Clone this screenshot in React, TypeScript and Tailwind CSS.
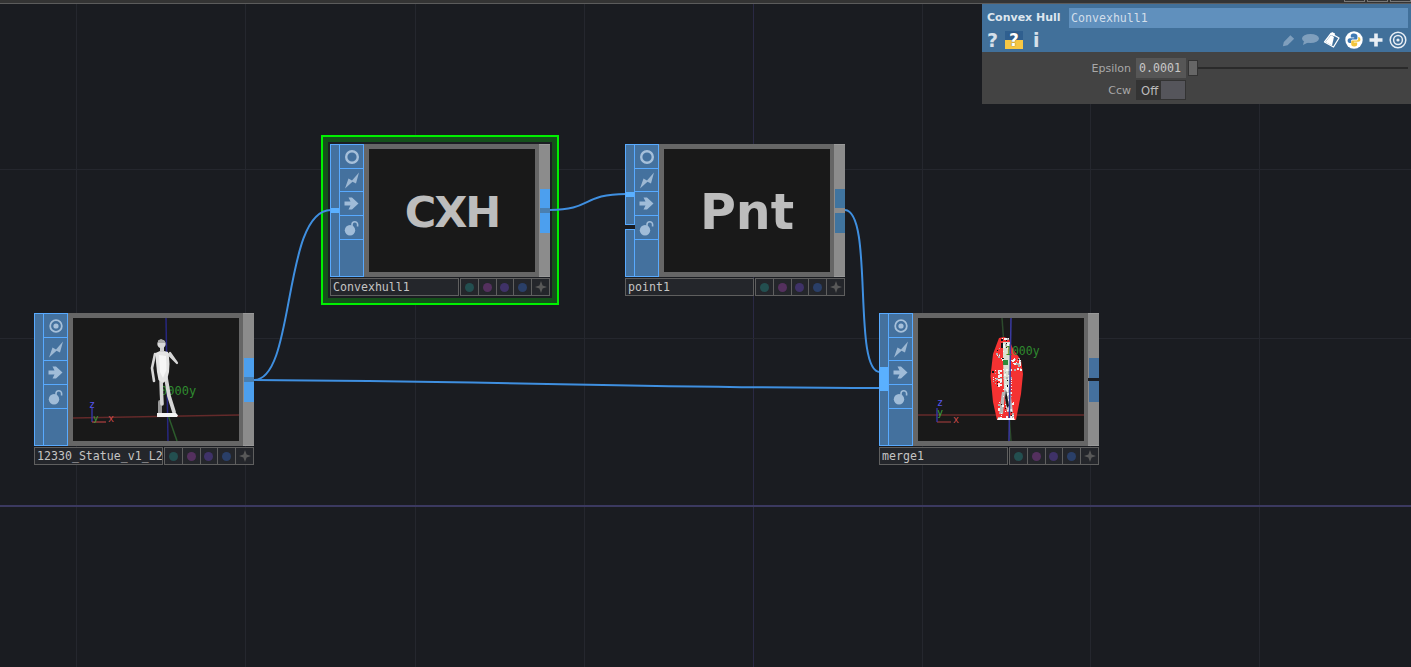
import type { ReactNode } from 'react';

const MONO = 'font-["DejaVu_Sans_Mono",monospace]';

type NodeProps = {
  x: number;
  y: number;
  name: string;
  inputs: ReactNode;
  outputs: ReactNode;
  target?: boolean;
  children: ReactNode;
};

function CircleIcon({ target }: { target?: boolean }) {
  return (
    <svg width="16" height="16" viewBox="0 0 16 16">
      <circle cx="8" cy="8" r="5.8" fill="none" stroke="#a6c0da" strokeWidth={target ? 1.8 : 2.4} />
      {target && <circle cx="8" cy="8" r="2.6" fill="#a6c0da" />}
    </svg>
  );
}

function BoltIcon() {
  return (
    <svg width="16" height="17" viewBox="0 0 16 17">
      <path d="M1 16.5 L4.5 6.5 L8 8.5 L15 0.5 L12 11.5 L8.5 9.8 Z" fill="#9db8d3" />
    </svg>
  );
}

function ArrowIcon() {
  return (
    <svg width="15" height="13" viewBox="0 0 15 13">
      <path d="M0.5 4.5 H6.5 L4.5 0.5 H8 L14.5 6.5 L8 12.5 H4.5 L6.5 8.5 H0.5 Z" fill="#a0bcd8" />
    </svg>
  );
}

function LockIcon() {
  return (
    <svg width="16" height="16" viewBox="0 0 16 16">
      <circle cx="6" cy="10.2" r="5.2" fill="#a0bcd8" />
      <path d="M8 6 V4.5 A2.8 2.8 0 0 1 13.6 4.5 V6.5" fill="none" stroke="#a0bcd8" strokeWidth="1.6" />
    </svg>
  );
}

function NodeFlags() {
  const dots = ['bg-[#234f50]', 'bg-[#54305e]', 'bg-[#3f3268]', 'bg-[#2a3f68]'];
  return (
    <div className="ml-px flex h-[18px] w-[90px] border border-[#5f5f5f] bg-[#24262b]">
      {dots.map((c) => (
        <div key={c} className="flex flex-1 items-center justify-center border-r border-[#5f5f5f]">
          <div className={`h-[9px] w-[9px] rounded-full ${c}`} />
        </div>
      ))}
      <div className="flex flex-1 items-center justify-center">
        <svg width="12" height="12" viewBox="0 0 12 12">
          <path d="M6 0 L7.6 4.4 L12 6 L7.6 7.6 L6 12 L4.4 7.6 L0 6 L4.4 4.4 Z" fill="#585858" />
        </svg>
      </div>
    </div>
  );
}

function OpNode({ x, y, name, inputs, outputs, target, children }: NodeProps) {
  return (
    <div className="absolute flex h-[152px] w-[220px] flex-col" style={{ left: x, top: y }}>
      <div className="flex h-[133px]">
        <div className="w-[10px] shrink-0">{inputs}</div>
        <div className="flex w-[24px] shrink-0 flex-col border border-l-0 border-[#58aaff] bg-[#44719e]">
          <div className="flex h-[24px] items-center justify-center border-b border-[#58aaff]">
            <CircleIcon target={target} />
          </div>
          <div className="flex h-[23px] items-center justify-center border-b border-[#58aaff]">
            <BoltIcon />
          </div>
          <div className="flex h-[24px] items-center justify-center border-b border-[#58aaff]">
            <ArrowIcon />
          </div>
          <div className="flex h-[24px] items-center justify-center border-b border-[#58aaff]">
            <LockIcon />
          </div>
        </div>
        <div className="relative min-w-0 flex-1 overflow-hidden border-[5px] border-r-[4px] border-[#666666] bg-[#191919]">{children}</div>
        <div className="w-[11px] shrink-0 border-t border-b border-[#999999] bg-[#8c8c8c] pl-px">{outputs}</div>
      </div>
      <div className="mt-px flex h-[18px]">
        <div className={`h-full w-[129px] overflow-hidden border border-[#5f5f5f] bg-[#24262b] pl-[2px] text-[11.6px] leading-[16px] whitespace-nowrap text-[#c4c4c4] ${MONO}`}>
          {name}
        </div>
        <NodeFlags />
      </div>
    </div>
  );
}

// input column, with the small or wide connector marker
function InputStrip({ markerTop, markerH = 5 }: { markerTop: number; markerH?: number }) {
  return (
    <div className="relative h-full border border-[#58aaff] bg-[#44719e]">
      <div className="absolute left-0 w-full bg-[#5ab0ff]" style={{ top: markerTop, height: markerH }} />
    </div>
  );
}

function LabelText({ size, spacing = 0, children }: { size: number; spacing?: number; children: string }) {
  return (
    <div
      className="flex h-full items-center justify-center pt-1 font-['DejaVu_Sans'] font-bold text-[#bdbdbd]"
      style={{ fontSize: size, letterSpacing: spacing }}
    >
      {children}
    </div>
  );
}

function StatuePreview() {
  return (
    <svg width="166" height="123" viewBox="0 0 166 123" className="block">
      <path d="M93 0 L95 123" stroke="#27277f" strokeWidth="1.5" />
      <path d="M0 100 L166 97" stroke="#642a2a" strokeWidth="1.5" />
      <path d="M95 97 L104 123" stroke="#2c5c2c" strokeWidth="1.5" />
      <path d="M19 90 V104" stroke="#3a3ac0" strokeWidth="1.2" />
      <path d="M19 104 H33" stroke="#b04040" strokeWidth="1.2" />
      <text x="16" y="90" fill="#5555ee" fontSize="10" fontFamily="DejaVu Sans Mono">z</text>
      <text x="20" y="103" fill="#3fa03f" fontSize="9" fontFamily="DejaVu Sans Mono">y</text>
      <text x="35" y="104" fill="#d04a4a" fontSize="10" fontFamily="DejaVu Sans Mono">x</text>
      <text x="87" y="77" fill="#2f8a2f" fontSize="12" fontFamily="DejaVu Sans Mono">0000y</text>
      {/* statue */}
      <g fill="none" stroke="#d6d6d6" strokeLinecap="round" strokeLinejoin="round">
        <path d="M87 84 L87 95" strokeWidth="4" stroke="#989898" />
        <path d="M88 60 L88.5 76 L89 86" strokeWidth="3.6" />
        <path d="M93 60 L96 78 L101 94" strokeWidth="3.8" />
        <path d="M82 36 L79 50 L81 63" strokeWidth="2.6" />
        <path d="M95 36 L104 45 L97 35" strokeWidth="2.2" />
      </g>
      <path d="M82.5 35 L87 33 L91 33 L95 34 L96 39 L96.5 46 L96 54 L94 62 L90 65 L85.5 62 L84 54 L83 44 Z" fill="#e4e4e4" />
      <path d="M86 37 L93 38 L93.5 52 L90 60 L87 54 Z" fill="#f6f6f6" />
      <path d="M87 29 H91 V34 H87 Z" fill="#cfcfcf" />
      <circle cx="88.5" cy="26" r="4.2" fill="#d8d8d8" />
      <path d="M85 22.5 L88 21 L92 23 V25 H85 Z" fill="#aaaaaa" />
      <path d="M84 95 H103 L105 97.5 L104 99 H84 Z" fill="#f4f4f4" />
    </svg>
  );
}

// pixel scatter of the statue showing through the hull
const CLUSTERS = [
  { x0: 74, x1: 84, y0: 52, y1: 68, n: 34 },
  { x0: 92, x1: 103, y0: 40, y1: 52, n: 30 },
  { x0: 78, x1: 86, y0: 28, y1: 42, n: 14 },
  { x0: 83, x1: 93, y0: 20, y1: 30, n: 30 },
  { x0: 80, x1: 96, y0: 84, y1: 101, n: 44 },
  { x0: 84, x1: 94, y0: 50, y1: 84, n: 44 },
];

function speckles() {
  const out: { x: number; y: number; c: string; d: number }[] = [];
  let s = 11;
  for (const c of CLUSTERS) {
    for (let i = 0; i < c.n; i++) {
      s = (s * 137 + 59) % 1009;
      const y = c.y0 + (s % (c.y1 - c.y0));
      s = (s * 137 + 59) % 1009;
      const x = c.x0 + (s % (c.x1 - c.x0));
      out.push({ x, y, c: s % 5 === 0 ? '#151515' : s % 3 === 0 ? '#b0b0b0' : '#f4f4f4', d: s % 2 === 0 ? 2 : 1 });
    }
  }
  return out;
}

function HullPreview() {
  return (
    <svg width="166" height="123" viewBox="0 0 166 123" className="block">
      <path d="M84 0 L93 123" stroke="#2c4a2c" strokeWidth="1.5" />
      <path d="M0 97 H166" stroke="#642a2a" strokeWidth="1.5" />
      <path d="M19 104 H33" stroke="#b04040" strokeWidth="1" fill="none" />
      <path d="M19 90 V104" stroke="#3a3ac0" strokeWidth="1.2" />
      <text x="19" y="88" fill="#5555ee" fontSize="10" fontFamily="DejaVu Sans Mono">z</text>
      <text x="19" y="98" fill="#3fa03f" fontSize="10" fontFamily="DejaVu Sans Mono">y</text>
      <text x="35" y="105" fill="#d04a4a" fontSize="10" fontFamily="DejaVu Sans Mono">x</text>
      <path d="M81 20 L86 19 L91 21 L95 31 L103 42 L105 56 L103 76 L98 102 L79 102 L75 84 L72.5 58 L75 36 Z" fill="#f53232" />
      <path d="M85 24 L91 24 L92 40 L92 72 L86 72 L85 40 Z" fill="#d9e0d2" />
      <path d="M86 72 L92 72 L95 94 L89 94 Z" fill="#c0c0c0" />
      <path d="M84 74 L87 74 L85 96 L81 96 Z" fill="#b8b8b8" />
      {speckles().map((p, i) => (
        <rect key={i} x={p.x} y={p.y} width={p.d} height={p.d} fill={p.c} />
      ))}
      <path d="M88 72 L91 88 L89 90 L87 80 Z" fill="#151515" />
      <path d="M93 0 L91 123" stroke="#3a3aa0" strokeWidth="1.5" />
      <path d="M80 100 L96 100 L97 102 L79 102 Z" fill="#ffffff" />
      <text x="87" y="37" fill="#2f8a2f" fontSize="11.5" fontFamily="DejaVu Sans Mono">1000y</text>
      <rect x="85" y="42" width="5" height="5" fill="#2e8a3a" />
    </svg>
  );
}

function HeaderIcons() {
  return (
    <div className="-mr-px flex h-[22px] items-center justify-end">
      <svg width="15" height="15" viewBox="0 0 16 16">
        <path d="M2 14 L3 9.5 L10 2.5 L14 6 L7 13 Z" fill="#7f9fbd" />
      </svg>
      <svg width="20" height="14" viewBox="0 0 20 14" className="ml-[4px]">
        <ellipse cx="10.5" cy="5.5" rx="8.5" ry="4.5" fill="#7f9fbd" />
        <path d="M4 8 L3 12 L9 9 Z" fill="#7f9fbd" />
      </svg>
      <svg width="18" height="18" viewBox="0 0 18 18" className="ml-[3px]">
        <path d="M1.5 11 L8 2.5 L16 7 L10.5 16 Z" fill="#41709a" stroke="#ffffff" strokeWidth="1.3" strokeLinejoin="round" />
        <path d="M2.5 11 L8 4 L11 6 L9 14.5 Z" fill="#ffffff" />
        <path d="M7 3.5 L9 1 L12 2.5 L11.5 5.5 Z" fill="#ffffff" />
      </svg>
      <svg width="18" height="18" viewBox="0 0 18 18" className="ml-[4px]">
        <circle cx="9" cy="9" r="8.7" fill="#ffffff" />
        <path d="M9 2.5 C6 2.5 5.8 4 5.8 5 V6.5 H9.2 V7.2 H4.8 C3.4 7.2 2.6 8.2 2.6 9.5 C2.6 11 3.4 12 4.6 12 H6 V10.3 C6 9.2 6.8 8.6 7.8 8.6 H10.8 C11.8 8.6 12.4 8 12.4 7 V5 C12.4 3.4 11 2.5 9 2.5 Z" fill="#3f7ab5" />
        <path d="M9 15.5 C12 15.5 12.2 14 12.2 13 V11.5 H8.8 V10.8 H13.2 C14.6 10.8 15.4 9.8 15.4 8.5 C15.4 7 14.6 6 13.4 6 H13.2 V7.7 C13.2 8.8 12.4 9.6 11.4 9.6 H7.8 C6.8 9.6 6.2 10.2 6.2 11 V13 C6.2 14.6 7 15.5 9 15.5 Z" fill="#f2c53d" />
      </svg>
      <svg width="16" height="16" viewBox="0 0 16 16" className="ml-[5px]">
        <path d="M6.2 1.5 H9.8 V6.2 H14.5 V9.8 H9.8 V14.5 H6.2 V9.8 H1.5 V6.2 H6.2 Z" fill="#e8eef5" />
      </svg>
      <svg width="18" height="18" viewBox="0 0 18 18" className="ml-[5px]">
        <circle cx="9" cy="9" r="7.8" fill="none" stroke="#e8eef5" strokeWidth="1.5" />
        <circle cx="9" cy="9" r="4.4" fill="none" stroke="#e8eef5" strokeWidth="1.5" />
        <circle cx="9" cy="9" r="1.6" fill="#e8eef5" />
      </svg>
    </div>
  );
}

function ParamPanel() {
  return (
    <div className="absolute top-[4px] right-0 h-[100px] w-[429px] bg-[#434343]">
      <div className="flex h-[48px] flex-col bg-[#41709a] px-[5px] pt-[4px]">
        <div className="flex h-[20px] items-center">
          <div className="w-[82px] shrink-0 font-['DejaVu_Sans'] text-[11px] font-bold whitespace-nowrap text-[#dde6ee]">
            Convex Hull
          </div>
          <div className={`mr-[-2px] h-full flex-1 bg-[#6090bd] pl-[2px] text-[11.6px] leading-[20px] text-[#d2deea] ${MONO}`}>
            Convexhull1
          </div>
        </div>
        <div className="flex h-[24px] items-center justify-between">
          <div className="flex items-center">
            <span className="w-[18px] font-['DejaVu_Sans'] text-[19px] leading-none font-bold text-[#d6e0ea]">?</span>
            <span className="relative flex h-[18px] w-[18px] items-center justify-center bg-[#2f5f8f]">
              <span className="absolute inset-x-0 bottom-0 h-[9px] bg-[#f6c744]" />
              <span className="relative font-['DejaVu_Sans'] text-[17px] leading-none font-bold text-[#ffffff] [text-shadow:0_0_1px_#333333]">?</span>
            </span>
            <span className="ml-[10px] font-['DejaVu_Sans'] text-[19px] leading-none font-bold text-[#d6e0ea]">i</span>
          </div>
          <HeaderIcons />
        </div>
      </div>
      <div className="mt-[6px] flex h-[20px] items-center pl-[109px]">
        <span className="w-[40px] pt-[2px] text-right font-['DejaVu_Sans'] text-[11px] text-[#a8a8a8]">Epsilon</span>
        <div className={`ml-[5px] h-[20px] w-[50px] bg-[#565656] pl-[3px] text-[11.6px] leading-[21px] text-[#c8c8c8] ${MONO}`}>0.0001</div>
        <div className="relative ml-[2px] flex h-[20px] flex-1 items-center">
          <div className="h-[2px] w-full bg-[#2a2a2a]" />
          <div className="absolute left-0 h-[16px] w-[10px] border border-[#333333] bg-[#666666]" />
        </div>
        <div className="w-[3px]" />
      </div>
      <div className="mt-[2px] flex h-[20px] items-center pl-[109px]">
        <span className="w-[40px] pt-[2px] text-right font-['DejaVu_Sans'] text-[11px] text-[#a8a8a8]">Ccw</span>
        <div className="ml-[5px] flex h-[20px] w-[50px] border border-[#333333] bg-[#333333] font-['DejaVu_Sans'] text-[11.6px] leading-[20px] text-[#bcbcbc]">
          <span className="w-[24px] pl-[4px]">Off</span>
          <span className="flex-1 bg-[#55555b]" />
        </div>
      </div>
    </div>
  );
}

function OutputBlock() {
  return (
    <div className="mt-[44px] h-[44px] bg-[#4c9fee] pt-[19px]">
      <div className="h-[5px] bg-[#4a7fb0]" />
    </div>
  );
}

export default function App() {
  const vLines = [76, 245, 415, 584, 922, 1090, 1259];
  return (
    <div className="relative h-[667px] w-[1411px] overflow-hidden bg-[#1a1c21]">
      {/* network grid */}
      <svg width="1411" height="667" className="absolute inset-0">
        {vLines.map((x) => (
          <line key={x} x1={x + 0.5} y1="0" x2={x + 0.5} y2="667" stroke="#25272e" />
        ))}
        <line x1="753.5" y1="0" x2="753.5" y2="667" stroke="#2a2944" />
        <line x1="0" y1="169.5" x2="1411" y2="169.5" stroke="#25272e" />
        <line x1="0" y1="338.5" x2="1411" y2="338.5" stroke="#25272e" />
        <line x1="0" y1="506" x2="1411" y2="506" stroke="#3b3960" strokeWidth="2" />
      </svg>

      {/* selection highlight */}
      <div className="absolute top-[135px] left-[321px] h-[170px] w-[238px] border-2 border-[#00f000] bg-[#14501a] p-[5px]">
        <div className="h-full w-full bg-[#1b1d22]" />
      </div>

      {/* wires */}
      <svg width="1411" height="667" className="absolute inset-0">
        <g fill="none" stroke="#3f8fe0" strokeWidth="2">
          <path d="M254 380 C296 380 282 210 331 210" />
          <path d="M254 380 C500 381 650 388 880 388" />
          <path d="M550 210 C592 210 582 194 626 194" />
          <path d="M845 210 C874 212 852 372 880 372" />
        </g>
      </svg>

      {/* title bar edge */}
      <div className="absolute top-0 left-0 flex h-[4px] w-full justify-end border-b border-[#5c5c5c] bg-[#343434]">
        <div className="flex gap-[2px]">
          <div className="h-[2px] w-[21px] border border-t-0 border-[#777777]" />
          <div className="h-[2px] w-[21px] border border-t-0 border-[#777777]" />
          <div className="h-[2px] w-[21px] border border-t-0 border-[#777777]" />
        </div>
      </div>

      <OpNode x={34} y={313} name="12330_Statue_v1_L2" target inputs={<div className="h-full border border-[#58aaff] bg-[#44719e]" />} outputs={<OutputBlock />}>
        <StatuePreview />
      </OpNode>

      <OpNode x={330} y={144} name="Convexhull1" inputs={<InputStrip markerTop={63} />} outputs={<OutputBlock />}>
        <LabelText size={43} spacing={-2}>CXH</LabelText>
      </OpNode>

      <OpNode x={625} y={144} name="point1"
        inputs={
          <div className="flex h-full flex-col gap-[4px]">
            <div className="relative h-[81px] border border-[#58aaff] bg-[#44719e]">
              <div className="absolute left-0 top-[47px] h-[5px] w-full bg-[#5ab0ff]" />
            </div>
            <div className="flex-1 border border-[#58aaff] bg-[#44719e]" />
          </div>
        }
        outputs={
          <div className="flex flex-col gap-[5px] pt-[44px]">
            <div className="h-[19px] bg-[#40749f]" />
            <div className="h-[20px] bg-[#40749f]" />
          </div>
        }
      >
        <LabelText size={49}>Pnt</LabelText>
      </OpNode>

      <OpNode x={879} y={313} name="merge1" target inputs={<InputStrip markerTop={53} markerH={24} />}
        outputs={
          <div className="flex flex-col pt-[44px]">
            <div className="h-[20px] bg-[#44709e]" />
            <div className="-ml-px h-[3px] w-[11px] bg-[#1b1d22]" />
            <div className="h-[21px] bg-[#44709e]" />
          </div>
        }
      >
        <HullPreview />
      </OpNode>

      <ParamPanel />
    </div>
  );
}
